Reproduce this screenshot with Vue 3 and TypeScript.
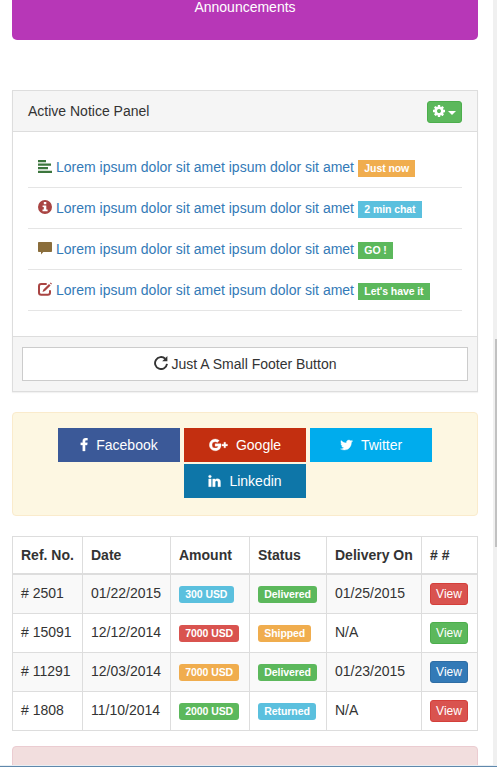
<script setup lang="ts">
interface Notice {
  icon: 'align' | 'info' | 'comment' | 'edit'
  tone: string
  badge: string
  label: string
}

interface Social {
  name: string
  key: string
  width: number
  viewBox: string
  path: string
}

interface Order {
  ref: string
  date: string
  amount: string
  amountTone: string
  status: string
  statusTone: string
  delivery: string
  action: string
}

const notices: Notice[] = [
  { icon: 'align', tone: 'text-success', badge: 'Just now', label: 'warning' },
  { icon: 'info', tone: 'text-danger', badge: '2 min chat', label: 'info' },
  { icon: 'comment', tone: 'text-warning', badge: 'GO !', label: 'success' },
  { icon: 'edit', tone: 'text-danger', badge: "Let's have it", label: 'success' },
]

const socials: Social[] = [
  {
    name: 'Facebook',
    key: 'facebook',
    width: 8,
    viewBox: '384 0 1024 1792',
    path: 'M1343 12v264h-157q-86 0-116 36t-30 108v189h293l-39 296h-254v759h-306v-759h-255v-296h255v-218q0-186 104-288.5t277-102.5q147 0 228 12z',
  },
  {
    name: 'Google',
    key: 'google',
    width: 19,
    viewBox: '0 0 19 14',
    path: 'M6.1 5.7v2.5h3.2c-.3 1.2-1.4 1.9-3.1 1.9A3.2 3.2 0 0 1 6.2 3.7c.9 0 1.6.3 2.1.8l2-1.9A5.9 5.9 0 0 0 6.2 1a5.9 5.9 0 1 0 0 11.8c3.6 0 5.9-2.4 5.9-5.8l-.1-1.3zM14.9 4.3h1.7v1.9h1.9v1.7h-1.9v1.9h-1.7V7.9H13V6.2h1.9z',
  },
  {
    name: 'Twitter',
    key: 'twitter',
    width: 13,
    viewBox: '64 0 1664 1792',
    path: 'M1684 408q-67 98-162 167 1 14 1 42 0 130-38 259.5t-115.5 248.5-184.5 210.5-258 146-323 54.5q-271 0-496-145 35 4 78 4 225 0 401-138-105-2-188-64.5t-114-159.5q33 5 61 5 43 0 85-11-112-23-185.5-111.5t-73.5-205.5v-4q68 38 146 41-66-44-105-115t-39-154q0-88 44-163 121 149 294.5 238.5t371.5 99.5q-8-38-8-74 0-134 94.5-228.5t228.5-94.5q140 0 236 102 109-21 205-78-37 115-142 178 93-10 186-50z',
  },
  {
    name: 'Linkedin',
    key: 'linkedin',
    width: 13,
    viewBox: '64 0 1664 1792',
    path: 'M477 625v991h-330v-991h330zm21-306q1 73-50.5 122t-135.5 49h-2q-82 0-132-49t-50-122q0-74 51.5-122.5t134.5-48.5 133 48.5 51 122.5zm1166 729v568h-329v-530q0-105-40.5-164.5t-126.5-59.5q-63 0-105.5 34.5t-63.5 85.5q-11 30-11 81v553h-329q2-399 2-647t-1-296l-1-48h329v144h-2q20-32 41-56t56.5-52 87-43.5 114.5-15.5q171 0 275 113.5t104 332.5z',
  },
]

const columns: string[] = ['Ref. No.', 'Date', 'Amount', 'Status', 'Delivery On', '# #']

const orders: Order[] = [
  { ref: '# 2501', date: '01/22/2015', amount: '300 USD', amountTone: 'info', status: 'Delivered', statusTone: 'success', delivery: '01/25/2015', action: 'danger' },
  { ref: '# 15091', date: '12/12/2014', amount: '7000 USD', amountTone: 'danger', status: 'Shipped', statusTone: 'warning', delivery: 'N/A', action: 'success' },
  { ref: '# 11291', date: '12/03/2014', amount: '7000 USD', amountTone: 'warning', status: 'Delivered', statusTone: 'success', delivery: '01/23/2015', action: 'primary' },
  { ref: '# 1808', date: '11/10/2014', amount: '2000 USD', amountTone: 'success', status: 'Returned', statusTone: 'info', delivery: 'N/A', action: 'danger' },
]
</script>

<template>
  <div class="screen">
    <main class="content">
      <section class="announce">Announcements</section>

      <section class="panel">
        <header class="panel-heading">
          <span>Active Notice Panel</span>
          <button class="btn-xs success gear" type="button" aria-label="Settings">
            <svg width="12" height="12" viewBox="128 128 1536 1536" fill="#fff">
              <path d="M1152 896q0-106-75-181t-181-75-181 75-75 181 75 181 181 75 181-75 75-181zm512-109v222q0 12-8 23t-20 13l-185 28q-19 54-39 91 35 50 107 138 10 12 10 25t-9 23q-27 37-99 108t-94 71q-12 0-26-9l-138-108q-44 23-91 38-16 136-29 186-7 28-36 28h-222q-14 0-24.5-8.5t-11.5-21.5l-28-184q-49-16-90-37l-141 107q-10 9-25 9-14 0-25-11-126-114-165-168-7-10-7-23 0-12 8-23 15-21 51-66.5t54-70.5q-27-50-41-99l-183-27q-13-2-21-12.5t-8-23.5v-222q0-12 8-23t19-13l186-28q14-46 39-92-40-57-107-138-10-12-10-24 0-10 9-23 26-36 98.5-107.5t94.5-71.5q13 0 26 10l138 107q44-23 91-38 16-136 29-186 7-28 36-28h222q14 0 24.5 8.5t11.5 21.5l28 184q49 16 90 37l142-107q9-9 24-9 13 0 25 10 129 119 165 170 7 8 7 22 0 12-8 23-15 21-51 66.5t-54 70.5q26 50 41 98l183 28q13 2 21 12.5t8 23.5z" />
            </svg>
            <span class="caret"></span>
          </button>
        </header>
        <ul class="notices">
          <li v-for="n in notices" :key="n.badge">
            <svg class="glyph" :class="n.tone" width="14" height="14" viewBox="0 0 14 14" fill="currentColor">
              <path v-if="n.icon === 'align'" d="M0 1h8v2.3H0zM0 4.4h13v2.3H0zM0 8h10v2.3H0zM0 11.7h14V14H0z" />
              <path v-else-if="n.icon === 'info'" fill-rule="evenodd" d="M7 0a7 7 0 1 0 0 14A7 7 0 0 0 7 0zM5.8 2h2.5v2.3H5.8zM4.6 5.4h3.7v4h1.3v1.8H4.5V9.4h1.3V7H4.6z" />
              <path v-else-if="n.icon === 'comment'" d="M.8 1h12.4q.8 0 .8.8v8.4q0 .8-.8.8H5.3L3 13.6V11H.8q-.8 0-.8-.8V1.8Q0 1 .8 1z" />
              <g v-else>
                <path d="M8.7 2.1H3.2Q1 2.1 1 4.3v6.2q0 2.2 2.2 2.2h6.6q2.2 0 2.2-2.2V8.3" fill="none" stroke="currentColor" stroke-width="2" />
                <path d="M11 2l1.6 1.6L7 9.1l-2.5.9.9-2.5zM11.9 1.3l.8-.8L14 1.8l-.8.8z" />
              </g>
            </svg>
            <a class="notice-link">Lorem ipsum dolor sit amet ipsum dolor sit amet</a>
            <span class="label square" :class="n.label">{{ n.badge }}</span>
          </li>
        </ul>
        <footer class="panel-footer">
          <button class="wide" type="button">
            <svg width="14" height="14" viewBox="0 0 14 14" fill="none">
              <path d="M11.2 2.7A6 6 0 1 0 13 7.9" stroke="#333" stroke-width="1.9" />
              <path d="M13.4 0v5.2H8.2z" fill="#333" />
            </svg>
            <span>Just A Small Footer Button</span>
          </button>
        </footer>
      </section>

      <section class="socials">
        <a v-for="s in socials" :key="s.key" class="social" :class="s.key">
          <svg :width="s.width" height="14" :viewBox="s.viewBox" fill="#fff"><path :d="s.path" /></svg>
          <span>{{ s.name }}</span>
        </a>
      </section>

      <table class="orders">
        <colgroup>
          <col class="c-ref" /><col class="c-date" /><col class="c-amount" />
          <col class="c-status" /><col class="c-delivery" /><col class="c-action" />
        </colgroup>
        <thead>
          <tr><th v-for="c in columns" :key="c">{{ c }}</th></tr>
        </thead>
        <tbody>
          <tr v-for="o in orders" :key="o.ref">
            <td>{{ o.ref }}</td>
            <td>{{ o.date }}</td>
            <td><span class="label" :class="o.amountTone">{{ o.amount }}</span></td>
            <td><span class="label" :class="o.statusTone">{{ o.status }}</span></td>
            <td>{{ o.delivery }}</td>
            <td><button class="btn-xs" :class="o.action" type="button">View</button></td>
          </tr>
        </tbody>
      </table>

      <section class="alert"></section>
    </main>
    <div class="scroll-track"><div class="scroll-thumb"></div></div>
    <div class="window-edge"></div>
  </div>
</template>

<style>
body {
  margin: 0;
  overflow: hidden;
}
</style>

<style scoped>
* {
  box-sizing: border-box;
}
.screen {
  position: relative;
  display: flex;
  justify-content: space-between;
  width: 497px;
  height: 767px;
  overflow: hidden;
  background: #fff;
  color: #333;
  font: 14px/20px "Liberation Sans", Arial, sans-serif;
}
.content {
  width: 466px;
  margin-left: 12px;
}
.announce {
  height: 40px;
  margin-bottom: 50px;
  background: #b737b7;
  border-radius: 0 0 5px 5px;
  color: #fff;
  line-height: 14px;
  text-align: center;
}
.panel {
  margin-bottom: 20px;
  border: 1px solid #ddd;
  box-shadow: 0 1px 1px rgba(0, 0, 0, 0.05);
}
.panel-heading {
  display: flex;
  align-items: flex-start;
  justify-content: space-between;
  height: 41px;
  padding: 10px 15px;
  background: #f5f5f5;
  border-bottom: 1px solid #ddd;
}
.btn-xs {
  height: 22px;
  padding: 1px 5px;
  border: 1px solid;
  border-radius: 3px;
  color: #fff;
  font: 12px/18px "Liberation Sans", Arial, sans-serif;
}
.gear {
  display: flex;
  align-items: center;
  gap: 3px;
  width: 35px;
}
.gear svg {
  flex: none;
  margin-top: -2px;
}
.caret {
  border-top: 4px solid #fff;
  border-left: 4px solid transparent;
  border-right: 4px solid transparent;
  margin-top: 2px;
}
.notices {
  margin: 0;
  padding: 15px 15px 25px;
  list-style: none;
}
.notices li {
  height: 41px;
  padding: 10px;
  border-bottom: 1px solid #e5e5e5;
  white-space: nowrap;
}
.glyph {
  margin-right: 4px;
  vertical-align: -1px;
}
.text-success { color: #3c763d; }
.text-danger { color: #a94442; }
.text-warning { color: #8a6d3b; }
.notice-link {
  margin-right: 4px;
  color: #337ab7;
}
.label {
  padding: 0.2em 0.6em 0.3em;
  border-radius: 3px;
  color: #fff;
  font-size: 10.5px;
  font-weight: 700;
  letter-spacing: -0.08px;
  line-height: 1;
  white-space: nowrap;
}
.square {
  border-radius: 0;
}
.label.info { background: #5bc0de; }
.label.warning { background: #f0ad4e; }
.label.success { background: #5cb85c; }
.label.danger { background: #d9534f; }
.btn-xs.success { background: #5cb85c; border-color: #4cae4c; }
.btn-xs.danger { background: #d9534f; border-color: #d43f3a; }
.btn-xs.primary { background: #337ab7; border-color: #2e6da4; }
.panel-footer {
  padding: 10px 9px;
  background: #f5f5f5;
  border-top: 1px solid #ddd;
}
.wide {
  display: flex;
  align-items: center;
  justify-content: center;
  gap: 4px;
  width: 100%;
  height: 34px;
  background: #fff;
  border: 1px solid #ccc;
  color: #333;
  font: inherit;
}
.wide svg {
  margin-top: -2px;
}
.socials {
  display: flex;
  flex-wrap: wrap;
  justify-content: center;
  gap: 2px 4px;
  margin-bottom: 20px;
  padding: 15px 15px 17px;
  background: #fdf7e2;
  border: 1px solid #faebcc;
  border-radius: 4px;
}
.social {
  display: flex;
  align-items: center;
  justify-content: center;
  gap: 8px;
  width: 122px;
  height: 34px;
  color: #fff;
}
.social path {
  stroke: #fff;
  stroke-width: 0.3px;
  vector-effect: non-scaling-stroke;
}
.facebook { background: #3b5998; }
.google { background: #c32f10; }
.twitter { background: #00aced; }
.linkedin { background: #0e76a8; }
.orders {
  width: 466px;
  margin-bottom: 15px;
  border-collapse: collapse;
  table-layout: fixed;
}
.c-ref { width: 70px; }
.c-date { width: 88px; }
.c-amount { width: 79px; }
.c-status { width: 77px; }
.c-delivery { width: 95px; }
.c-action { width: 56px; }
.orders th,
.orders td {
  padding: 8px;
  border: 1px solid #ddd;
  text-align: left;
  vertical-align: top;
  white-space: nowrap;
}
.orders th {
  border-bottom-width: 2px;
}
.orders tbody tr:nth-child(odd) {
  background: #f9f9f9;
}
.orders .btn-xs {
  display: block;
  width: 38px;
}
.alert {
  height: 60px;
  background: #f2dede;
  border: 1px solid #ebccd1;
  border-radius: 4px;
}
.scroll-track {
  width: 4px;
  padding: 339px 0 0 2px;
  background: #f0f0f0;
}
.scroll-thumb {
  height: 208px;
  background: #c1c1c1;
}
.window-edge {
  position: absolute;
  inset: auto 0 0;
  height: 2px;
  background: #5f88ac;
  border-top: 1px solid #e8eef3;
}
</style>
